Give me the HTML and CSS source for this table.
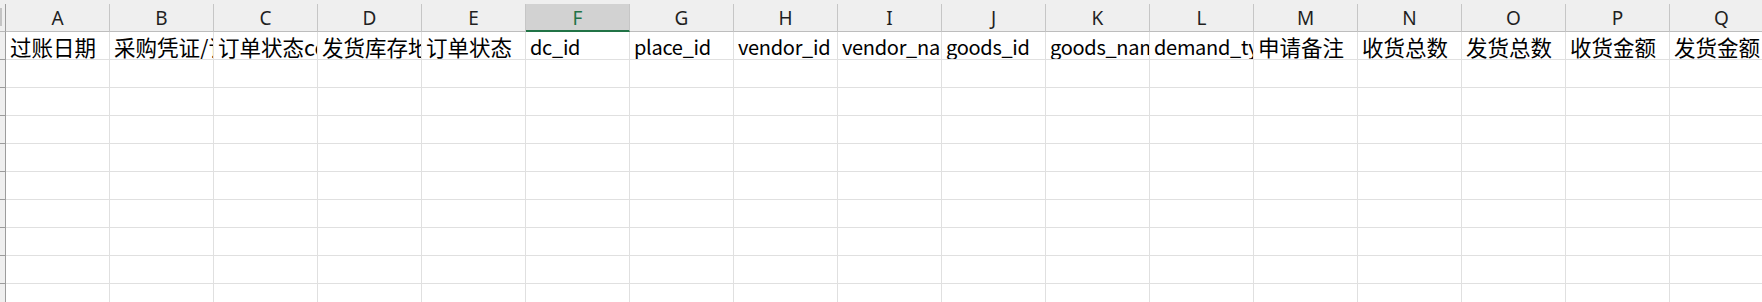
FILE: index.html
```html
<!DOCTYPE html>
<html lang="zh-CN">
<head>
<meta charset="utf-8">
<title>Sheet1</title>
<link rel="stylesheet" href="styles.css">
</head>
<body>
<div class="sheet">
  <div class="row colhead">
    <div class="corner"><span class="corner-mark"></span></div>
    <div class="ch">A</div><div class="ch">B</div><div class="ch">C</div><div class="ch">D</div>
    <div class="ch">E</div><div class="ch ch-active">F</div><div class="ch">G</div><div class="ch">H</div>
    <div class="ch">I</div><div class="ch">J</div><div class="ch">K</div><div class="ch">L</div>
    <div class="ch">M</div><div class="ch">N</div><div class="ch">O</div><div class="ch">P</div>
    <div class="ch">Q</div>
  </div>

  <div class="row">
    <div class="rh"></div>
    <div class="c">过账日期</div>
    <div class="c">采购凭证/订单</div>
    <div class="c">订单状态code</div>
    <div class="c">发货库存地点</div>
    <div class="c">订单状态</div>
    <div class="c c-latin">dc_id</div>
    <div class="c c-latin">place_id</div>
    <div class="c c-latin">vendor_id</div>
    <div class="c c-latin">vendor_name</div>
    <div class="c c-latin">goods_id</div>
    <div class="c c-latin">goods_name</div>
    <div class="c c-latin">demand_type</div>
    <div class="c">申请备注</div>
    <div class="c">收货总数</div>
    <div class="c">发货总数</div>
    <div class="c">收货金额</div>
    <div class="c">发货金额</div>
  </div>

  <div class="row"><div class="rh"></div><div class="c"></div><div class="c"></div><div class="c"></div><div class="c"></div><div class="c"></div><div class="c"></div><div class="c"></div><div class="c"></div><div class="c"></div><div class="c"></div><div class="c"></div><div class="c"></div><div class="c"></div><div class="c"></div><div class="c"></div><div class="c"></div><div class="c"></div></div>
  <div class="row"><div class="rh"></div><div class="c"></div><div class="c"></div><div class="c"></div><div class="c"></div><div class="c"></div><div class="c"></div><div class="c"></div><div class="c"></div><div class="c"></div><div class="c"></div><div class="c"></div><div class="c"></div><div class="c"></div><div class="c"></div><div class="c"></div><div class="c"></div><div class="c"></div></div>
  <div class="row"><div class="rh"></div><div class="c"></div><div class="c"></div><div class="c"></div><div class="c"></div><div class="c"></div><div class="c"></div><div class="c"></div><div class="c"></div><div class="c"></div><div class="c"></div><div class="c"></div><div class="c"></div><div class="c"></div><div class="c"></div><div class="c"></div><div class="c"></div><div class="c"></div></div>
  <div class="row"><div class="rh"></div><div class="c"></div><div class="c"></div><div class="c"></div><div class="c"></div><div class="c"></div><div class="c"></div><div class="c"></div><div class="c"></div><div class="c"></div><div class="c"></div><div class="c"></div><div class="c"></div><div class="c"></div><div class="c"></div><div class="c"></div><div class="c"></div><div class="c"></div></div>
  <div class="row"><div class="rh"></div><div class="c"></div><div class="c"></div><div class="c"></div><div class="c"></div><div class="c"></div><div class="c"></div><div class="c"></div><div class="c"></div><div class="c"></div><div class="c"></div><div class="c"></div><div class="c"></div><div class="c"></div><div class="c"></div><div class="c"></div><div class="c"></div><div class="c"></div></div>
  <div class="row"><div class="rh"></div><div class="c"></div><div class="c"></div><div class="c"></div><div class="c"></div><div class="c"></div><div class="c"></div><div class="c"></div><div class="c"></div><div class="c"></div><div class="c"></div><div class="c"></div><div class="c"></div><div class="c"></div><div class="c"></div><div class="c"></div><div class="c"></div><div class="c"></div></div>
  <div class="row"><div class="rh"></div><div class="c"></div><div class="c"></div><div class="c"></div><div class="c"></div><div class="c"></div><div class="c"></div><div class="c"></div><div class="c"></div><div class="c"></div><div class="c"></div><div class="c"></div><div class="c"></div><div class="c"></div><div class="c"></div><div class="c"></div><div class="c"></div><div class="c"></div></div>
  <div class="row"><div class="rh"></div><div class="c"></div><div class="c"></div><div class="c"></div><div class="c"></div><div class="c"></div><div class="c"></div><div class="c"></div><div class="c"></div><div class="c"></div><div class="c"></div><div class="c"></div><div class="c"></div><div class="c"></div><div class="c"></div><div class="c"></div><div class="c"></div><div class="c"></div></div>
  <div class="row"><div class="rh"></div><div class="c"></div><div class="c"></div><div class="c"></div><div class="c"></div><div class="c"></div><div class="c"></div><div class="c"></div><div class="c"></div><div class="c"></div><div class="c"></div><div class="c"></div><div class="c"></div><div class="c"></div><div class="c"></div><div class="c"></div><div class="c"></div><div class="c"></div></div>
</div>
</body>
</html>
```

FILE: styles.css
```css
html, body {
  margin: 0;
  padding: 0;
  background: #ffffff;
  overflow: hidden;
}

.sheet {
  width: 1762px;
  height: 302px;
  overflow: hidden;
  font-family: "Noto Sans CJK SC", "Noto Sans", sans-serif;
  color: #000;
}

.row {
  display: grid;
  grid-template-columns: 6px repeat(17, 104px);
  height: 28px;
}

/* column letters */
.colhead {
  height: 32px;
  padding-top: 4px;
  box-sizing: border-box;
  background: #efefef;
}

.corner {
  box-sizing: border-box;
  border-right: 1px solid #9c9c9c;
  border-bottom: 1px solid #b8b8b8;
  display: flex;
  align-items: flex-start;
  padding-top: 4px;
}

.corner-mark {
  display: block;
  width: 2px;
  height: 18px;
  background: #c4c4c4;
}

.ch {
  box-sizing: border-box;
  height: 28px;
  border-right: 1px solid #c6c6c6;
  border-bottom: 1px solid #bdbdbd;
  font-family: "Noto Sans", "Liberation Sans", sans-serif;
  font-size: 19px;
  line-height: 29px;
  text-align: center;
  color: #1f1f1f;
}

.ch-active {
  background: #d2d2d2;
  border-bottom: 2px solid #217346;
  color: #217346;
}

/* row header strip on the left */
.rh {
  box-sizing: border-box;
  background: #efefef;
  border-right: 1px solid #9c9c9c;
  border-bottom: 1px solid #9c9c9c;
}

/* cells */
.c {
  box-sizing: border-box;
  height: 28px;
  border-right: 1px solid #e0e0e0;
  border-bottom: 1px solid #e0e0e0;
  padding: 0 0 0 4px;
  font-size: 21.5px;
  line-height: 30px;
  white-space: nowrap;
  overflow: hidden;
}

.c-latin {
  font-size: 20px;
  letter-spacing: -0.3px;
}
```
